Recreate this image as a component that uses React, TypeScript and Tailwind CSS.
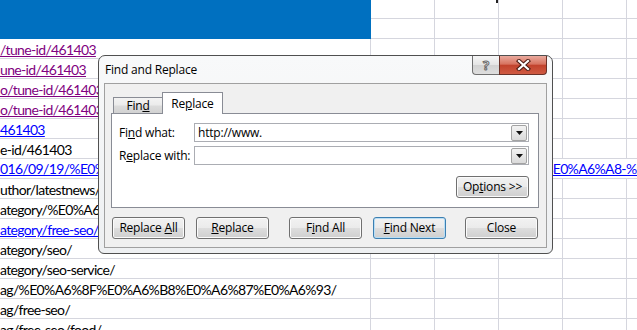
import React from 'react'

const grid = 'border-[#d5d6de]'

type Tone = 'visited' | 'link' | 'plain'

const rows: { text: string; tone: Tone; span?: boolean }[] = [
  { text: '/tune-id/461403', tone: 'visited' },
  { text: 'une-id/461403', tone: 'visited' },
  { text: 'o/tune-id/461403', tone: 'visited' },
  { text: 'o/tune-id/461403', tone: 'visited' },
  { text: '461403', tone: 'link' },
  { text: 'e-id/461403', tone: 'plain' },
  {
    text: '016/09/19/%E0%A6%AE%E0%A6%BE%E0%A6%B0%E0%A7%8D%E0%A6%95%E0%A7%87%E0%A6%A8-%E0%A6%B8%E0%A6%BF%E0%A6%82/',
    tone: 'link',
    span: true,
  },
  { text: 'uthor/latestnews/', tone: 'plain' },
  { text: 'ategory/%E0%A6%B8%E0%A6%BE/', tone: 'plain' },
  { text: 'ategory/free-seo/', tone: 'link' },
  { text: 'ategory/seo/', tone: 'plain' },
  { text: 'ategory/seo-service/', tone: 'plain' },
  { text: 'ag/%E0%A6%8F%E0%A6%B8%E0%A6%87%E0%A6%93/', tone: 'plain' },
  { text: 'ag/free-seo/', tone: 'plain' },
  { text: 'ag/free-seo/food/', tone: 'plain' },
]

function toneClass(t: Tone) {
  if (t === 'visited') return 'text-[#800080] underline'
  if (t === 'link') return 'text-[#0000ff] underline'
  return 'text-black'
}

function Cells() {
  return (
    <>
      <div className={`w-[64px] shrink-0 border-b border-r ${grid}`} />
      <div className={`w-[64px] shrink-0 border-b border-r ${grid}`} />
      <div className={`w-[64px] shrink-0 border-b border-r ${grid}`} />
      <div className={`w-[64px] shrink-0 border-b border-r ${grid}`} />
      <div className={`flex-1 border-b ${grid}`} />
    </>
  )
}

function SheetRow({ text, tone, span }: { text: string; tone: Tone; span?: boolean }) {
  if (span) {
    return (
      <div className={`flex h-[20px] shrink-0 border-b ${grid} overflow-hidden`}>
        <span className={`whitespace-nowrap leading-[19px] ${toneClass(tone)}`}>{text}</span>
      </div>
    )
  }
  return (
    <div className="flex h-[20px] shrink-0">
      <div className={`w-[371px] shrink-0 border-b border-r ${grid} overflow-hidden`}>
        <span className={`whitespace-nowrap leading-[19px] ${toneClass(tone)}`}>{text}</span>
      </div>
      <Cells />
    </div>
  )
}

function Btn({ children, primary }: { children: React.ReactNode; primary?: boolean }) {
  return (
    <div
      className={`w-[73px] h-[22px] shrink-0 rounded-[3px] border flex items-center justify-center bg-[linear-gradient(#f2f2f2,#ebebeb_48%,#dddddd_52%,#cfcfcf)] ${
        primary
          ? 'border-[#3c7fb1] shadow-[inset_0_0_0_1px_#b9def5]'
          : 'border-[#707070] shadow-[inset_0_0_0_1px_#fbfbfb]'
      }`}
    >
      {children}
    </div>
  )
}

function Drop() {
  return (
    <div className="w-[16px] h-[16px] shrink-0 rounded-[2px] border border-[#a3a3a3] bg-[linear-gradient(#f3f3f3,#dadada)] flex items-center justify-center">
      <svg width="7" height="4" viewBox="0 0 7 4">
        <path d="M0 0h7L3.5 4z" fill="#111" />
      </svg>
    </div>
  )
}

function Field({ label, value }: { label: React.ReactNode; value: string }) {
  return (
    <div className="flex items-center h-[19px]">
      <span className="w-[75px] shrink-0 leading-[16px]">{label}</span>
      <div className="flex-1 h-full border border-[#abadb3] bg-white flex items-center pl-[3px] pr-px">
        <span className="flex-1 leading-[16px]">{value}</span>
        <Drop />
      </div>
    </div>
  )
}

function Dialog() {
  return (
    <div className="absolute left-[98px] top-[55px] w-[455px] h-[199px] rounded-t-[7px] rounded-b-[6px] border border-[#505050] bg-[linear-gradient(#f8f9fa,#eef0f2)] flex flex-col px-[5px] pb-[5px] font-['Open_Sans',sans-serif] text-[12px] text-black tracking-[-0.2px]">
      <div className="h-[27px] shrink-0 flex items-start">
        <span className="mt-[6px] ml-[1px] leading-[16px]">Find and Replace</span>
        <div className="ml-auto flex h-[19px]">
          <div className="w-[27px] h-full rounded-bl-[4px] border border-t-0 border-r-0 border-[#707070] bg-[linear-gradient(#f6f6f6,#e4e4e4_50%,#d2d2d2_52%,#dedede)] flex items-center justify-center">
            <span className="text-[13px] font-bold leading-none text-white [-webkit-text-stroke:1px_#6a6a6a]">?</span>
          </div>
          <div className="w-[48px] h-full rounded-br-[4px] border border-t-0 border-[#6a3128] bg-[linear-gradient(#eaaa9e,#d7735f_45%,#c2432d_52%,#cf5a42)] flex items-center justify-center">
            <svg width="15" height="12" viewBox="0 0 15 12">
              <path d="M3 2l9 8M12 2l-9 8" stroke="#4a1a12" strokeWidth="4.2" strokeLinecap="square" />
              <path d="M3 2l9 8M12 2l-9 8" stroke="#ffffff" strokeWidth="2.2" strokeLinecap="square" />
            </svg>
          </div>
        </div>
      </div>

      <div className="flex-1 border border-[#a0a0a0] bg-[#f0f0f0] flex flex-col pl-[6px] pr-[7px] pt-[8px]">
        <div className="flex items-end h-[21px] shrink-0 pl-[2px]">
          <div className="w-[50px] h-[16px] border border-b-0 border-[#898c95] bg-[linear-gradient(#f3f3f3,#ebebeb_48%,#dcdcdc_52%,#d2d2d2)] flex items-center justify-center leading-[14px]">
            <span>
              Fin<u>d</u>
            </span>
          </div>
          <div className="relative z-10 -ml-px -mb-px w-[61px] h-[22px] border border-b-0 border-[#898c95] bg-white flex items-center justify-center">
            <span className="leading-[16px]">
              Re<u>p</u>lace
            </span>
          </div>
        </div>

        <div className="h-[95px] shrink-0 border border-[#898c95] bg-white pl-[7px] pr-[9px] pt-[9px] flex flex-col">
          <Field
            label={
              <>
                Fi<u>n</u>d what:
              </>
            }
            value="http://www."
          />
          <div className="mt-[4px]">
            <Field
              label={
                <>
                  R<u>e</u>place with:
                </>
              }
              value=""
            />
          </div>
          <div className="mt-[11px] flex justify-end">
            <Btn>
              <span>
                Op<u>t</u>ions &gt;&gt;
              </span>
            </Btn>
          </div>
        </div>

        <div className="flex mt-[9px] pl-px">
          <Btn>
            <span>
              Replace <u>A</u>ll
            </span>
          </Btn>
          <div className="ml-[11px]">
            <Btn>
              <span>
                <u>R</u>eplace
              </span>
            </Btn>
          </div>
          <div className="ml-[20px]">
            <Btn>
              <span>
                F<u>i</u>nd All
              </span>
            </Btn>
          </div>
          <div className="ml-[11px]">
            <Btn primary>
              <span>
                <u>F</u>ind Next
              </span>
            </Btn>
          </div>
          <div className="ml-[19px]">
            <Btn>Close</Btn>
          </div>
        </div>
      </div>
    </div>
  )
}

export default function App() {
  return (
    <div className="relative w-[637px] h-[330px] overflow-hidden bg-white font-['Lato',sans-serif] text-[14px] tracking-[-0.65px]">
      <div className="flex flex-col">
        <div className="flex h-[19px] shrink-0">
          <div className="w-[371px] shrink-0 bg-[#0070c0]" />
          <div className={`w-[64px] shrink-0 border-b border-r ${grid}`} />
          <div className={`w-[64px] shrink-0 border-b border-r ${grid} flex justify-end`}>
            <div className="w-[2px] h-[3px] bg-[#222]" />
          </div>
          <div className={`w-[64px] shrink-0 border-b border-r ${grid}`} />
          <div className={`w-[64px] shrink-0 border-b border-r ${grid}`} />
          <div className={`flex-1 border-b ${grid}`} />
        </div>
        <div className="flex h-[20px] shrink-0">
          <div className="w-[371px] shrink-0 bg-[#0070c0]" />
          <Cells />
        </div>
        {rows.map((r, i) => (
          <SheetRow key={i} {...r} />
        ))}
      </div>
      <Dialog />
    </div>
  )
}
